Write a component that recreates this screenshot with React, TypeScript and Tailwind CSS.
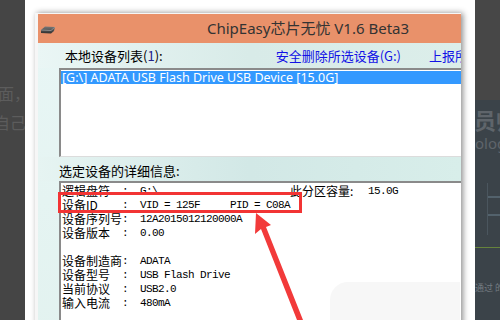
import React from 'react'

const cjk = "font-['Noto_Sans_CJK_SC','Noto_Sans',sans-serif]"
const mono = "font-['Liberation_Mono','Noto_Sans_CJK_SC',monospace]"

type Row = { label: string; value: string; extra?: [string, string] }

const rows: (Row | null)[] = [
  { label: '逻辑盘符', value: 'G:\\', extra: ['此分区容量:', '15.0G'] },
  { label: '设备ID', value: 'VID = 125F     PID = C08A' },
  { label: '设备序列号', value: '12A2015012120000A' },
  { label: '设备版本', value: '0.00' },
  null,
  { label: '设备制造商', value: 'ADATA' },
  { label: '设备型号', value: 'USB Flash Drive' },
  { label: '当前协议', value: 'USB2.0' },
  { label: '输入电流', value: '480mA' },
]

function DriveIcon() {
  return (
    <svg width="16" height="10" viewBox="0 0 16 10">
      <defs>
        <linearGradient id="drv" x1="0" y1="0" x2="0" y2="1">
          <stop offset="0" stopColor="#7a7a7a" />
          <stop offset="1" stopColor="#2e2e2e" />
        </linearGradient>
      </defs>
      <path d="M1 5 L5 1.5 L15 2 L14 6 L11 8.5 L1 8 Z" fill="url(#drv)" />
      <path d="M1 5 L11 5.5 L15 2" fill="none" stroke="#9a9a9a" strokeWidth="0.8" />
    </svg>
  )
}

export default function App() {
  return (
    <div className={`relative flex w-[500px] h-[320px] overflow-hidden bg-[#444] ${cjk}`}>
      {/* dimmed article on the left */}
      <div className="w-[25px] shrink-0 overflow-hidden bg-[#454545] text-[#5c5c5c] text-[16px] leading-none">
        <div className="mt-[85px] -ml-[2px] whitespace-nowrap">面，</div>
        <div className="mt-[13px] -ml-[6px] whitespace-nowrap">自己</div>
      </div>

      {/* screenshot */}
      <div className="w-[450px] shrink-0 bg-white pt-[13px] pl-[10px]">
        <div className="w-[426px] h-[320px] bg-[#f6f6f6] pl-[3px] pt-px shadow-[2px_0_6px_rgba(0,0,0,0.45)]">
          {/* title bar */}
          <div className="h-[29px] bg-[#e9916a] flex items-center">
            <div className="pl-[2px] pt-[2px]">
              <DriveIcon />
            </div>
            <div className="ml-[151px] text-[15px] text-[#333] font-['Noto_Sans','Noto_Sans_CJK_SC',sans-serif] whitespace-nowrap">
              ChipEasy芯片无忧 V1.6 Beta3
            </div>
          </div>

          {/* body */}
          <div className="bg-gradient-to-b from-[#e8f6f5] to-[#e2f2ef] h-full">
            <div className="h-[25px] flex items-center text-[13px] whitespace-nowrap overflow-hidden bg-gradient-to-r from-[#eaf6f5] via-[#d8ebe8] to-[#dceeea]">
              <span className="ml-[27px] text-black">
                本地设备列表(<span className="text-[#22208a]">1</span>):
              </span>
              <span className="ml-[113px] text-[#1212e6]">安全删除所选设备(G:)</span>
              <span className="ml-[28px] text-[#1212e6]">上报所选设备</span>
            </div>

            {/* device list */}
            <div className="ml-[21px] h-[89px] bg-white border-t-2 border-l-2 border-[#8a8a8a] border-b border-b-[#dcdcdc] overflow-hidden">
              <div className="h-[13px] mt-px bg-[#3399ff] text-white text-[12.5px] leading-[13px] pl-px whitespace-nowrap font-['Noto_Sans','Noto_Sans_CJK_SC',sans-serif]">
                [G:\] ADATA USB Flash Drive USB Device [15.0G]
              </div>
            </div>

            <div className="h-[24px] flex items-center text-[13px] text-black pl-[21px] pt-[3px] bg-gradient-to-r from-[#e6f4f2] via-[#d2e8e6] to-[#d8eeea]">
              选定设备的详细信息:
            </div>

            {/* details */}
            <div className="ml-[21px] h-[140px] bg-white border-t-2 border-l-2 border-[#8a8a8a] pt-px pl-px text-[12px] text-black">
              {rows.map((r, i) =>
                r ? (
                  <div key={i} className="flex h-[14px] items-center whitespace-pre">
                    <div className="w-[60px] leading-none">{r.label}</div>
                    <div className={`w-[18px] text-[11px] ${mono}`}>:</div>
                    <div className={`w-[150px] text-[11px] tracking-[-0.6px] ${mono}`}>{r.value}</div>
                    {r.extra && (
                      <>
                        <div className="w-[78px] leading-none">{r.extra[0]}</div>
                        <div className={`text-[11px] tracking-[-0.6px] ${mono}`}>{r.extra[1]}</div>
                      </>
                    )}
                  </div>
                ) : (
                  <div key={i} className="h-[14px]" />
                )
              )}
            </div>
          </div>
        </div>
      </div>

      {/* dimmed page on the right */}
      <div className="w-[25px] shrink-0 flex flex-col overflow-hidden whitespace-nowrap">
        <div className="h-[100px] bg-[#474747]" />
        <div className="flex-1 bg-[#3b4349] text-[#5f656b]">
          <div className="mt-[8px] text-[22px] font-bold leading-none -ml-[1px]">员帅</div>
          <div className="mt-[6px] text-[15px] leading-none font-['Noto_Sans',sans-serif]">ology</div>
          <div className="mt-[32px] ml-[12px] h-[52px] border-l border-[#4b565e] flex flex-col">
            <div className="mt-[13px] h-[2px] bg-[#53626c]" />
            <div className="mt-[16px] h-[2px] bg-[#53626c]" />
          </div>
          <div className="mt-[12px] h-px bg-[#66833c]" />
          <div className="mt-[35px] text-[9px] text-[#747b81] leading-none">通过 的</div>
        </div>
      </div>

      {/* annotations */}
      <div className="absolute left-[58px] top-[192px] w-[244px] h-[21px] border-[3px] border-[#f23434]" />
      <div className="absolute left-[330px] top-[282px] w-[130px] h-[38px] rounded-tl-[18px] bg-[#f3f3f3] opacity-70" />
      <svg className="absolute left-0 top-0" width="500" height="320" viewBox="0 0 500 320">
        <polygon points="256,213 271,225 266,227 303,320 297,320 261,229 255,234" fill="#f23a3a" />
      </svg>
    </div>
  )
}
